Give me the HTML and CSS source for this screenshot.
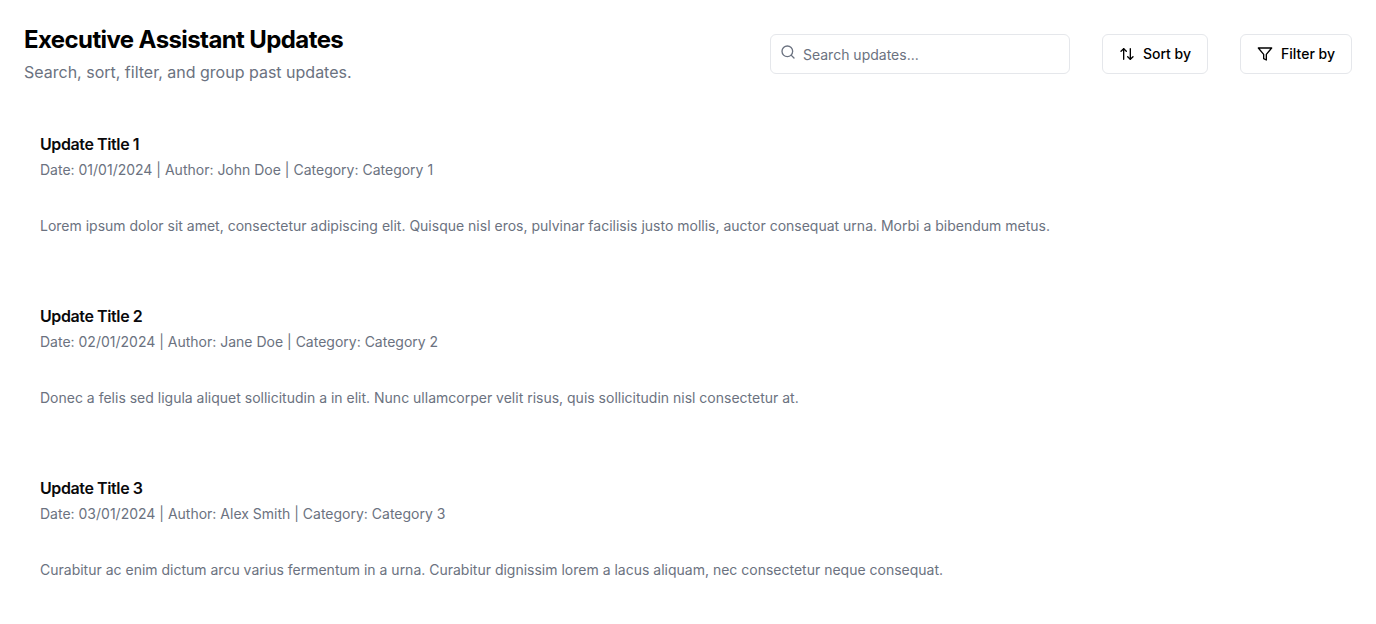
FILE: index.html
```html
<!DOCTYPE html>
<html lang="en">
<head>
<meta charset="utf-8">
<meta name="viewport" content="width=device-width, initial-scale=1">
<title>Executive Assistant Updates</title>
<link rel="stylesheet" href="styles.css">
</head>
<body>
<div class="page">
  <header class="header">
    <div class="intro">
      <h1 class="title">Executive Assistant Updates</h1>
      <p class="subtitle">Search, sort, filter, and group past updates.</p>
    </div>
    <div class="actions">
      <form class="search" role="search">
        <svg class="search-icon" viewBox="0 0 24 24" aria-hidden="true"><circle cx="11" cy="11" r="8"/><path d="m21 21-4.3-4.3"/></svg>
        <input class="search-input" type="search" placeholder="Search updates..." aria-label="Search updates">
      </form>
      <button class="button" type="button">
        <svg class="button-icon" viewBox="0 0 24 24" aria-hidden="true"><path d="m3 8 4-4 4 4"/><path d="M7 4v16"/><path d="m21 16-4 4-4-4"/><path d="M17 20V4"/></svg>
        Sort by
      </button>
      <button class="button" type="button">
        <svg class="button-icon" viewBox="0 0 24 24" aria-hidden="true"><path d="M22 3H2l8 9.46V19l4 2v-8.54L22 3z"/></svg>
        Filter by
      </button>
    </div>
  </header>
  <main class="updates">
    <article class="update">
      <h2 class="update-title">Update Title 1</h2>
      <p class="update-meta">Date: 01/01/2024 | Author: John Doe | Category: Category 1</p>
      <p class="update-body">Lorem ipsum dolor sit amet, consectetur adipiscing elit. Quisque nisl eros, pulvinar facilisis justo mollis, auctor consequat urna. Morbi a bibendum metus.</p>
    </article>
    <article class="update">
      <h2 class="update-title">Update Title 2</h2>
      <p class="update-meta">Date: 02/01/2024 | Author: Jane Doe | Category: Category 2</p>
      <p class="update-body">Donec a felis sed ligula aliquet sollicitudin a in elit. Nunc ullamcorper velit risus, quis sollicitudin nisl consectetur at.</p>
    </article>
    <article class="update">
      <h2 class="update-title">Update Title 3</h2>
      <p class="update-meta">Date: 03/01/2024 | Author: Alex Smith | Category: Category 3</p>
      <p class="update-body">Curabitur ac enim dictum arcu varius fermentum in a urna. Curabitur dignissim lorem a lacus aliquam, nec consectetur neque consequat.</p>
    </article>
  </main>
</div>
</body>
</html>
```
FILE: styles.css
```css
*, *::before, *::after {
  box-sizing: border-box;
}

body, h1, h2, p {
  margin: 0;
}

body {
  background: #fff;
  color: #09090b;
  font-family: Inter, "Liberation Sans", sans-serif;
  font-size: 14px;
  font-optical-sizing: none;
  line-height: 20px;
}

svg {
  fill: none;
  stroke: currentColor;
  stroke-width: 2;
  stroke-linecap: round;
  stroke-linejoin: round;
}

.page {
  display: flex;
  flex-direction: column;
  gap: 32px;
  padding: 24px;
}

.header {
  display: flex;
  align-items: center;
  justify-content: space-between;
  gap: 32px;
}

.title {
  color: #000;
  font-size: 24px;
  font-weight: 700;
  line-height: 32px;
  letter-spacing: -0.025em;
}

.subtitle {
  margin-top: 4px;
  color: #6b7280;
  font-size: 16px;
  line-height: 24px;
}

.actions {
  display: flex;
  align-items: center;
  gap: 32px;
}

.search {
  position: relative;
  width: 300px;
}

.search-icon {
  position: absolute;
  top: 10px;
  left: 10px;
  width: 16px;
  height: 16px;
  color: #6b7280;
}

.search-input {
  display: block;
  width: 100%;
  height: 40px;
  padding: 8px 12px 8px 32px;
  border: 1px solid #e5e7eb;
  border-radius: 6px;
  background: #fff;
  color: inherit;
  font: inherit;
}

.search-input::placeholder {
  color: #6b7280;
}

.button {
  display: inline-flex;
  align-items: center;
  gap: 8px;
  height: 40px;
  padding: 0 16px;
  border: 1px solid #e5e7eb;
  border-radius: 6px;
  background: #fff;
  color: #000;
  font: inherit;
  font-weight: 500;
}

.button-icon {
  width: 16px;
  height: 16px;
}

.updates {
  display: grid;
  gap: 36px;
}

.update {
  padding: 16px;
}

.update-title {
  font-size: 16px;
  font-weight: 600;
  line-height: 24px;
  letter-spacing: -0.025em;
}

.update-meta {
  margin-top: 4px;
  color: #6b7280;
}

.update-body {
  margin-top: 36px;
  color: #6b7280;
}
```
